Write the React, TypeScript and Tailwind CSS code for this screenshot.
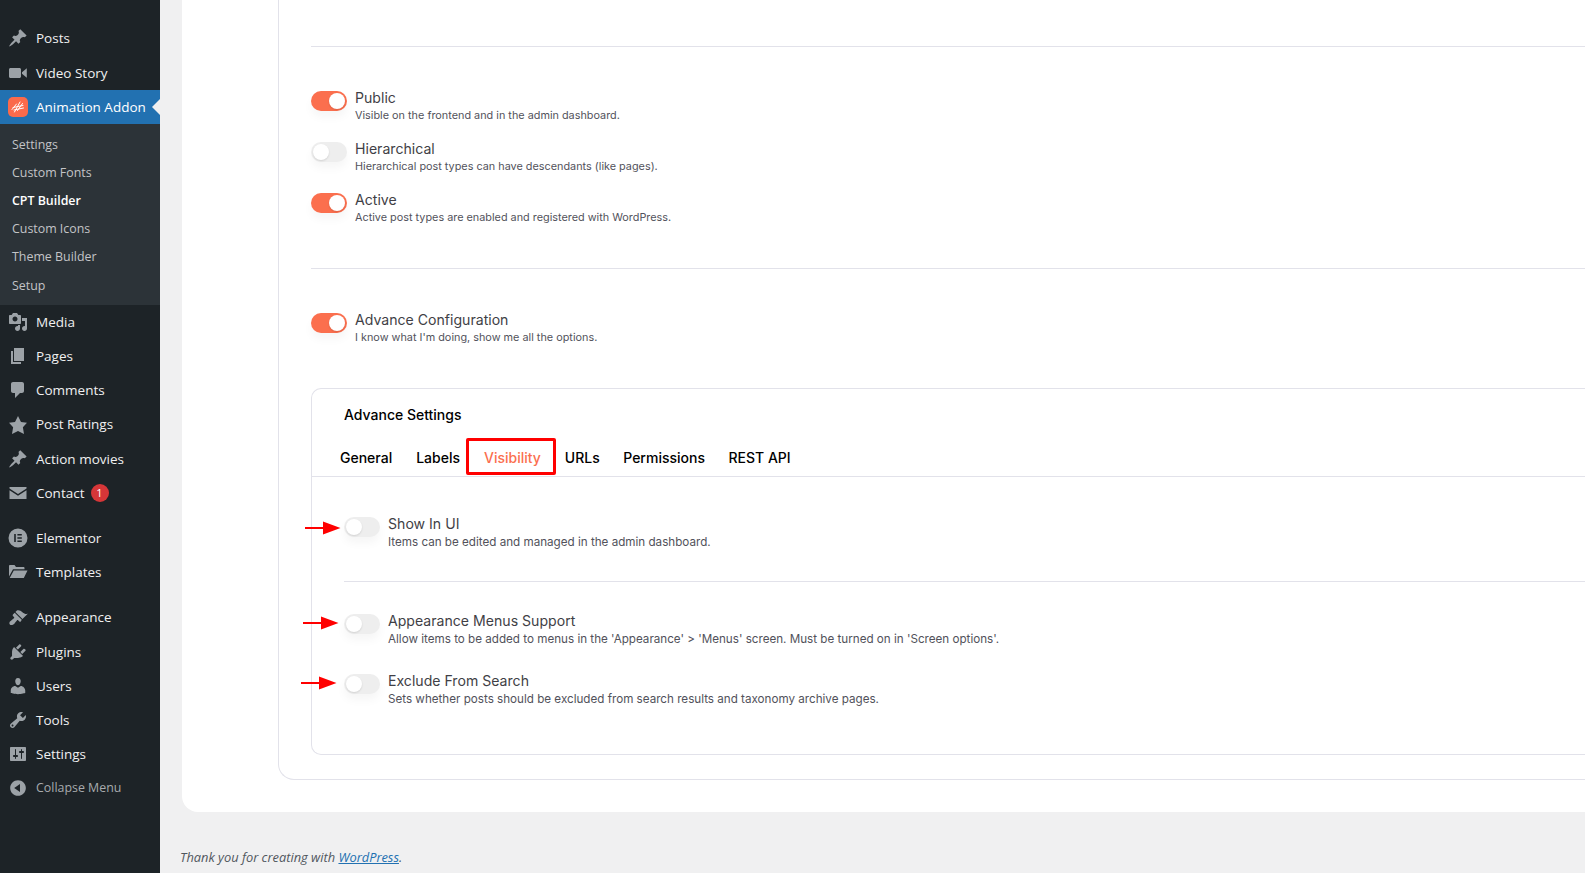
import type { ReactNode } from 'react';

const icons: Record<string, ReactNode> = {
    pin: <path d="M10.44 3.02l1.82-1.82 6.36 6.35-1.83 1.82c-1.05-.68-2.48-.57-3.41.36l-.75.75c-.92.93-1.04 2.35-.35 3.41l-1.83 1.82-2.41-2.41-2.8 2.79c-.42.42-3.38 2.71-3.8 2.29s1.86-3.39 2.28-3.81l2.79-2.79L4.1 9.36l1.83-1.82c1.05.69 2.48.57 3.4-.36l.75-.75c.93-.92 1.05-2.35.36-3.41z" />,
    video: <path d="M2.500 5h9c.8 0 1.500.7 1.500 1.500v7c0 .8-.7 1.500-1.500 1.500h-9c-.8 0-1.500-.7-1.500-1.500v-7C1 5.700 1.700 5 2.500 5zm11.500 4.200L18.800 5.300v9.400L14 10.800z" />,
    media: <path d="M13 11V4c0-.55-.45-1-1-1h-1.670L9 1H5L3.670 3H2c-.55 0-1 .45-1 1v7c0 .55.45 1 1 1h10c.55 0 1-.45 1-1zM7 4.500c1.380 0 2.500 1.120 2.500 2.500S8.380 9.500 7 9.500 4.500 8.380 4.500 7 5.620 4.500 7 4.500zM14 6h5v10.500c0 1.380-1.120 2.500-2.500 2.500S14 17.880 14 16.500s1.120-2.500 2.500-2.500c.17 0 .34.02.5.05V9h-3V6zm-4 8.050V13h2v3.500c0 1.380-1.120 2.500-2.500 2.500S7 17.880 7 16.500 8.120 14 9.500 14c.17 0 .34.02.5.05z" />,
    page: <path d="M6 15V2h10v13H6zm-1 1h8v2H3V5h2v11z" />,
    comments: <path d="M5 2h9c1.100 0 2 .9 2 2v7c0 1.100-.9 2-2 2h-2l-5 5v-5H5c-1.100 0-2-.9-2-2V4c0-1.100.9-2 2-2z" />,
    star: <path d="M10 1l3 6 6 .75-4.120 4.620L16 19l-6-3-6 3 1.130-6.630L1 7.750 7 7z" />,
    mail: <path d="M1.500 4h17v1.500L10 11 1.500 5.500V4zm0 3.300L10 12.800l8.500-5.500V16h-17V7.300z" />,
    elementor: <path fillRule="evenodd" d="M10 .5a9.500 9.500 0 1 1 0 19 9.500 9.500 0 0 1 0-19zM6.200 6v8h1.600V6H6.200zm3.200 0v1.600h4.400V6H9.400zm0 3.200v1.600h4.400V9.200H9.400zm0 3.200V14h4.400v-1.600H9.400z" />,
    folder: <path d="M1 14.500V4c0-.5.4-1 1-1h4.500L8 5h7.500c.5 0 1 .4 1 1v1.300H5L1 14.500zM5.800 8.500H19.500L15.800 16H1.700l4.100-7.500z" />,
    appearance: <path d="M14.480 11.060L7.410 3.990l1.500-1.500c.5-.56 2.300-.47 3.510.32 1.210.8 1.430 1.280 2.910 2.100 1.180.64 2.450 1.260 4.450.85zm-.71.71L6.700 4.700 4.930 6.470c-.39.39-.39 1.020 0 1.410l1.060 1.060c.39.39.39 1.030 0 1.420-.6.6-1.430 1.110-2.210 1.690-.35.26-.7.53-1.010.84C1.430 13.230.91 15.600 1.870 16.560c.99.99 3.160.43 4.500-.91.32-.33.59-.68.85-1.030.57-.78 1.080-1.610 1.690-2.220.39-.39 1.020-.39 1.410 0l1.060 1.060c.39.39 1.020.39 1.410 0z" />,
    plugins: <path d="M13.110 4.360L9.870 7.600 8 5.730l3.240-3.240c.35-.34 1.050-.2 1.560.32.52.51.66 1.210.31 1.550zm-8 1.770l.91-1.120 9.010 9.010-1.190.84c-.71.71-2.630 1.160-3.820 1.160H6.140L4.900 17.260c-.59.59-1.540.59-2.120 0-.59-.58-.59-1.530 0-2.120l1.240-1.240v-3.880c0-1.130.4-3.190 1.090-3.890zm7.260 3.970l3.240-3.240c.34-.35 1.040-.21 1.550.31.52.51.66 1.210.31 1.550l-3.240 3.250z" />,
    users: <path d="M10 9.250c-2.270 0-2.730-3.440-2.730-3.440C7 4.020 7.820 2 9.970 2c2.160 0 2.980 2.020 2.710 3.810 0 0-.41 3.440-2.680 3.440zm0 2.570L12.720 10c2.390 0 4.520 2.330 4.520 4.530v2.490s-3.650 1.130-7.240 1.130c-3.650 0-7.240-1.130-7.240-1.130v-2.490c0-2.250 1.940-4.480 4.470-4.480z" />,
    tools: <path d="M16.680 9.770c-1.340 1.340-3.300 1.670-4.950.99l-5.410 6.520c-.99.99-2.590.99-3.580 0s-.99-2.590 0-3.570l6.520-5.420c-.68-1.650-.35-3.610.99-4.950 1.280-1.280 3.120-1.620 4.720-1.060l-2.890 2.890 2.820 2.820 2.860-2.870c.53 1.580.18 3.390-1.080 4.670zM3.810 16.210c.4.39 1.040.39 1.430 0 .4-.4.4-1.040 0-1.430-.39-.4-1.030-.4-1.430 0-.39.39-.39 1.030 0 1.430z" />,
    settings: <path d="M18 16V4c0-.55-.45-1-1-1H3c-.55 0-1 .45-1 1v12c0 .55.45 1 1 1h14c.55 0 1-.45 1-1zM8 11h1c.55 0 1 .45 1 1s-.45 1-1 1H8v1.500c0 .28-.22.5-.5.5s-.5-.22-.5-.5V13H6c-.55 0-1-.45-1-1s.45-1 1-1h1V5.500c0-.28.22-.5.5-.5s.5.22.5.5V11zm5-2h-1c-.55 0-1-.45-1-1s.45-1 1-1h1V5.500c0-.28.22-.5.5-.5s.5.22.5.5V7h1c.55 0 1 .45 1 1s-.45 1-1 1h-1v5.500c0 .28-.22.5-.5.5s-.5-.22-.5-.5V9z" />,
    collapse: <path d="M10 2.160c4.330 0 7.840 3.510 7.840 7.840s-3.510 7.840-7.840 7.840S2.160 14.330 2.160 10 5.710 2.160 10 2.160zm2 11.720V6.120L6.180 9.970z" />,
};

function MenuItem({ icon, label, children }: { icon: string; label: string; children?: ReactNode }) {
    return (
        <div className="flex h-[34.2px] items-center text-[13.5px] text-[#f0f0f1]">
            <svg viewBox="0 0 20 20" className="ml-[8px] mr-[8px] h-5 w-5 fill-[#9ca2a7]">
                {icons[icon]}
            </svg>
            <span>{label}</span>
            {children}
        </div>
    );
}

function Toggle({ on }: { on: boolean }) {
    return (
        <div
            className={
                on
                    ? 'flex h-5 w-9 shrink-0 items-center justify-end rounded-full bg-[#fb6f4e] px-[2px] shadow-[0_6px_10px_rgba(0,0,0,0.04)]'
                    : 'flex h-5 w-9 shrink-0 items-center justify-start rounded-full bg-[#eeeeee] px-[2px] shadow-[0_6px_10px_rgba(0,0,0,0.04)]'
            }
        >
            <div className="h-4 w-4 rounded-full bg-white shadow-[0_1px_2px_rgba(0,0,0,0.12)]" />
        </div>
    );
}

function Option({ on, title, desc, wide, children }: { on: boolean; title: string; desc: string; wide?: boolean; children?: ReactNode }) {
    return (
        <div className="relative flex h-[33px] gap-2">
            {children}
            <Toggle on={on} />
            <div className="-mt-[2px]">
                <div className="text-[14.1px] leading-[18px] text-[#3f3f46]">{title}</div>
                <div className={wide ? 'mt-px text-[11.65px] leading-[16px] text-[#52525b]' : 'mt-px text-[10.85px] leading-[15px] text-[#52525b]'}>{desc}</div>
            </div>
        </div>
    );
}

function Arrow({ className }: { className: string }) {
    return (
        <svg viewBox="0 0 36 14" className={className}>
            <path d="M0 6h18V0.500L35.500 7 18 13.500V8H0z" fill="#ff0000" />
        </svg>
    );
}

export default function App() {
    return (
        <div className="flex h-[873px] w-[1585px] overflow-hidden bg-[#f0f0f1] font-['Inter',sans-serif]">
            <aside className="w-[160px] shrink-0 bg-[#1d2327] pt-[21.4px] font-['Open_Sans',sans-serif]">
                <MenuItem icon="pin" label="Posts" />
                <MenuItem icon="video" label="Video Story" />
                <div className="relative flex h-[34.2px] items-center bg-[#2271b1] text-[13.5px] text-white">
                    <svg viewBox="0 0 20 20" className="mx-[8px] h-5 w-5">
                        <rect width="20" height="20" rx="5" fill="#fa6a4b" />
                        <path d="M4 12.500L8.500 7M6.500 15L12 5M9.500 13.500L14.500 6.500M5 10.500L15 8.500M6 13L15.500 11" stroke="#ffffff" strokeWidth="1" strokeLinecap="round" fill="none" />
                    </svg>
                    <span>Animation Addon</span>
                    <div className="absolute right-0 top-[9px] h-0 w-0 border-y-[8px] border-r-[8px] border-y-transparent border-r-[#f0f0f1]" />
                </div>
                <div className="flex h-[181px] flex-col bg-[#2c3338] pl-[12px] pt-[7px] text-[12.4px] text-[#c3c4c7]">
                    <div className="flex h-[28.2px] items-center">Settings</div>
                    <div className="flex h-[28.2px] items-center">Custom Fonts</div>
                    <div className="flex h-[28.2px] items-center font-semibold text-white">CPT Builder</div>
                    <div className="flex h-[28.2px] items-center">Custom Icons</div>
                    <div className="flex h-[28.2px] items-center">Theme Builder</div>
                    <div className="flex h-[28.2px] items-center">Setup</div>
                </div>
                <MenuItem icon="media" label="Media" />
                <MenuItem icon="page" label="Pages" />
                <MenuItem icon="comments" label="Comments" />
                <MenuItem icon="star" label="Post Ratings" />
                <MenuItem icon="pin" label="Action movies" />
                <MenuItem icon="mail" label="Contact">
                    <span className="ml-[6px] flex h-[18px] w-[18px] items-center justify-center rounded-full bg-[#d63638] text-[11px] text-white">1</span>
                </MenuItem>
                <div className="h-[11px]" />
                <MenuItem icon="elementor" label="Elementor" />
                <MenuItem icon="folder" label="Templates" />
                <div className="h-[11px]" />
                <MenuItem icon="appearance" label="Appearance" />
                <MenuItem icon="plugins" label="Plugins" />
                <MenuItem icon="users" label="Users" />
                <MenuItem icon="tools" label="Tools" />
                <MenuItem icon="settings" label="Settings" />
                <div className="flex h-[34.2px] items-center text-[12.4px] text-[#a7aaad]">
                    <svg viewBox="0 0 20 20" className="mx-[8px] h-5 w-5 fill-[#9ca2a7]">
                        {icons.collapse}
                    </svg>
                    <span>Collapse Menu</span>
                </div>
            </aside>

            <main className="min-w-0 flex-1">
                <div className="ml-[22px] h-[812px] rounded-bl-[16px] bg-white pl-[96px]">
                    <div className="h-[780px] rounded-bl-[16px] border-b border-l border-[#e2e2ea] pl-[32px] pt-[46px]">
                        <div className="border-t border-[#e2e2ea] pt-[44px]">
                            <div className="flex flex-col gap-[18px]">
                                <Option on title="Public" desc="Visible on the frontend and in the admin dashboard." />
                                <Option on={false} title="Hierarchical" desc="Hierarchical post types can have descendants (like pages)." />
                                <Option on title="Active" desc="Active post types are enabled and registered with WordPress." />
                            </div>
                        </div>
                        <div className="mt-[42px] border-t border-[#e2e2ea] pt-[44px]">
                            <Option on title="Advance Configuration" desc="I know what I'm doing, show me all the options." />
                        </div>

                        <div className="mt-[42px] h-[367px] rounded-l-[10px] border-y border-l border-[#e2e2ea]">
                            <div className="pl-[32px] pt-[17px] text-[14px] font-medium leading-[18px] text-black">Advance Settings</div>
                            <div className="mt-[18px] flex h-[35px] gap-6 border-b border-[#e2e2ea] pl-[28px] pt-[7px] text-[14px] font-medium leading-[18px] text-black">
                                <span>General</span>
                                <span>Labels</span>
                                <span className="relative text-[#fb6f4e]">
                                    Visibility
                                    <span className="absolute -left-[18px] -right-[15px] -top-[11px] h-[37px] rounded-[2px] border-[3px] border-[#ff0000]" />
                                </span>
                                <span>URLs</span>
                                <span className="-ml-[0.5px]">Permissions</span>
                                <span className="-ml-[0.5px]">REST API</span>
                            </div>
                            <div className="pl-[32px] pt-[40px]">
                                <Option wide on={false} title="Show In UI" desc="Items can be edited and managed in the admin dashboard.">
                                    <Arrow className="absolute -left-[39px] top-[4px] h-[14px] w-[36px]" />
                                </Option>
                                <div className="mt-[31px] border-t border-[#e2e2ea]" />
                                <div className="mt-[32px] flex flex-col gap-[27px]">
                                    <Option wide on={false} title="Appearance Menus Support" desc="Allow items to be added to menus in the 'Appearance' > 'Menus' screen. Must be turned on in 'Screen options'.">
                                        <Arrow className="absolute -left-[41px] top-[2px] h-[14px] w-[36px]" />
                                    </Option>
                                    <Option wide on={false} title="Exclude From Search" desc="Sets whether posts should be excluded from search results and taxonomy archive pages.">
                                        <Arrow className="absolute -left-[43px] top-[2px] h-[14px] w-[36px]" />
                                    </Option>
                                </div>
                            </div>
                        </div>
                    </div>
                </div>
                <p className="ml-[20px] mt-[36px] font-['Open_Sans',sans-serif] text-[12.85px] italic leading-[18px] text-[#50575e]">
                    Thank you for creating with <a className="text-[#2271b1] underline">WordPress</a>.
                </p>
            </main>
        </div>
    );
}
